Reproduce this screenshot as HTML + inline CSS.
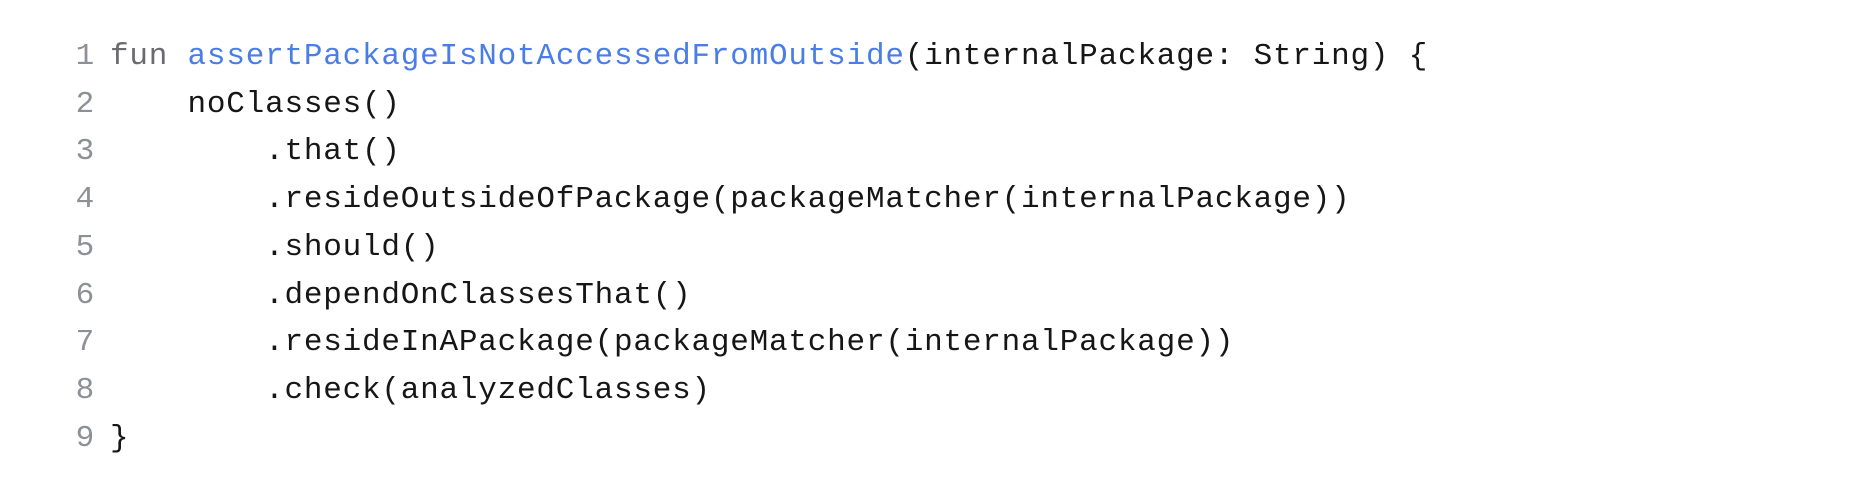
<!DOCTYPE html>
<html><head><meta charset="utf-8"><style>
html,body{margin:0;padding:0;background:#fff;width:1849px;height:486px;overflow:hidden}
.code{position:absolute;left:0;top:33px;font-family:"Liberation Mono",monospace;font-size:31px;letter-spacing:0.78px;line-height:47.7px;color:#161616;white-space:pre}
.ln{display:inline-block;width:110px;text-align:right;color:#8e9098;padding-right:15px;box-sizing:border-box}
.k{color:#6c6a70}.f{color:#4a7ee6}
</style></head><body>
<div class="code"><div><span class="ln">1</span><span class="k">fun</span> <span class="f">assertPackageIsNotAccessedFromOutside</span>(internalPackage: String) {</div><div><span class="ln">2</span>    noClasses()</div><div><span class="ln">3</span>        .that()</div><div><span class="ln">4</span>        .resideOutsideOfPackage(packageMatcher(internalPackage))</div><div><span class="ln">5</span>        .should()</div><div><span class="ln">6</span>        .dependOnClassesThat()</div><div><span class="ln">7</span>        .resideInAPackage(packageMatcher(internalPackage))</div><div><span class="ln">8</span>        .check(analyzedClasses)</div><div><span class="ln">9</span>}</div></div>
</body></html>
